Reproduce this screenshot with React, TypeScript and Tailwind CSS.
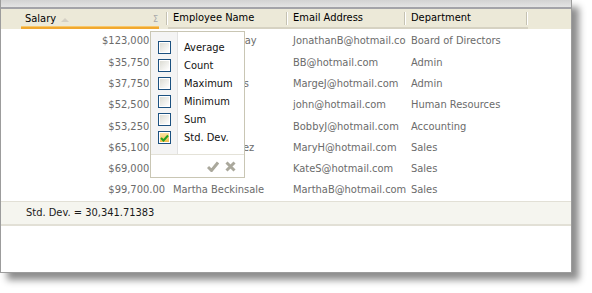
import React from "react";

const rows = [
  ["$123,000.00", "Jonathan Barclay", "JonathanB@hotmail.com", "Board of Directors"],
  ["$35,750.00", "Bob Burns", "BB@hotmail.com", "Admin"],
  ["$37,750.00", "Marge Jennings", "MargeJ@hotmail.com", "Admin"],
  ["$52,500.00", "John Smith", "john@hotmail.com", "Human Resources"],
  ["$53,250.00", "Bobby Jones", "BobbyJ@hotmail.com", "Accounting"],
  ["$65,100.00", "Mary Hernandez", "MaryH@hotmail.com", "Sales"],
  ["$69,000.00", "Kate Smith", "KateS@hotmail.com", "Sales"],
  ["$99,700.00", "Martha Beckinsale", "MarthaB@hotmail.com", "Sales"],
];

const items = ["Average", "Count", "Maximum", "Minimum", "Sum", "Std. Dev."];

function Box({ checked }: { checked?: boolean }) {
  return (
    <div className="w-[13px] h-[13px] border border-[#1c5180] p-[1px] bg-white">
      {checked ? (
        <div className="w-full h-full bg-gradient-to-b from-[#fbe4a0] to-[#f2bd4c] flex items-center justify-center">
          <svg width="9" height="8" viewBox="0 0 9 8">
            <path d="M1 4 L3.5 6.5 L8 1.5" stroke="#21a121" strokeWidth="2" fill="none" />
          </svg>
        </div>
      ) : (
        <div className="w-full h-full bg-gradient-to-br from-[#dcdcd4] to-[#ffffff]" />
      )}
    </div>
  );
}

export default function App() {
  return (
    <div
      className="w-[592px] h-[293px] bg-white relative overflow-hidden text-[11px]"
      style={{ fontFamily: '"DejaVu Sans Condensed", Tahoma, "Liberation Sans", sans-serif' }}
    >
      <div className="w-[572px] h-[273px] bg-white border-l border-r border-b border-[#9c9c9c] shadow-[7px_7px_7px_rgba(0,0,0,0.45)] flex flex-col">
        <div className="h-[9px] bg-gradient-to-b from-[#d2d2d2] to-[#e4e4e4] border-b-2 border-[#a3a3a8]" />
        <div className="h-[20px] bg-[#ece9d8] flex text-black">
          <div className="w-[20px]" />
          <div className="w-[147px] relative flex items-center pt-[1px]">
            <span className="ml-[4px]">Salary</span>
            <svg className="ml-[5px]" width="8" height="4" viewBox="0 0 8 4">
              <path d="M0 4 L4 0 L8 4 Z" fill="#d4d0c4" />
            </svg>
            <span className="ml-auto mr-[10px] text-[#a8a8a8] text-[9px]">Σ</span>
            <div className="absolute left-0 right-[9px] bottom-0 h-[3px] bg-[#f0a830] border-t border-[#f8c86a]" />
            <div className="absolute right-0 top-[3px] bottom-[4px] w-[2px] border-l border-[#c5c2b2] border-r border-r-white" />
          </div>
          {[
            ["Employee Name", "w-[120px]"],
            ["Email Address", "w-[118px]"],
            ["Department", "w-[122px]"],
          ].map(([t, w]) => (
            <div key={t} className={`${w} relative flex items-center pt-[1px] border-b-2 border-[#d6d2c2]`}>
              <span className="ml-[5px]">{t}</span>
              <div className="absolute right-0 top-[3px] bottom-[2px] w-[2px] border-l border-[#c5c2b2] border-r border-r-white" />
            </div>
          ))}
        </div>
        <div className="pt-[2px] text-[#6b6b6b]">
          {rows.map((r) => (
            <div key={r[0]} className="h-[21.3px] flex items-center">
              <div className="w-[20px]" />
              <div className="w-[147px] text-right pr-[3px] whitespace-nowrap">{r[0]}</div>
              <div className="w-[120px] pl-[5px] whitespace-nowrap overflow-hidden">{r[1]}</div>
              <div className="w-[118px] pl-[5px] whitespace-nowrap overflow-hidden">{r[2]}</div>
              <div className="w-[122px] pl-[5px] whitespace-nowrap overflow-hidden">{r[3]}</div>
            </div>
          ))}
        </div>
        <div className="h-[25px] bg-[#f5f5ef] border-t border-b-2 border-[#e2e0d6] flex items-center text-[#1a1a1a]">
          <span className="ml-[25px]">Std. Dev. = 30,341.71383</span>
        </div>
      </div>

      <div className="absolute left-[150px] top-[31px] w-[95px] h-[147px] bg-white border border-[#c9c6b4] flex flex-col">
        <div className="h-[123px] flex border-b border-[#e4e2d8]">
          <div className="w-[27px] bg-[#f4f4f4] border-r border-[#e2e2e2] pt-[9px] pl-[1px] flex flex-col items-center gap-[5px]">
            {items.map((it) => (
              <div key={it} className="h-[13px]">
                <Box checked={it === "Std. Dev."} />
              </div>
            ))}
          </div>
          <div className="pl-[6px] pt-[9px] flex flex-col gap-[5px] text-[#111]">
            {items.map((it) => (
              <div key={it} className="h-[13px] leading-[13px] whitespace-nowrap">{it}</div>
            ))}
          </div>
        </div>
        <div className="flex-1 flex items-center justify-end gap-[6px] pr-[8px]">
          <svg width="12" height="11" viewBox="0 0 12 11">
            <path d="M1 6 L4.5 9.5 L11 1.5" stroke="#aaa89c" strokeWidth="3" fill="none" />
          </svg>
          <svg width="11" height="11" viewBox="0 0 11 11">
            <path d="M1.5 1.5 L9.5 9.5 M9.5 1.5 L1.5 9.5" stroke="#aaa89c" strokeWidth="3" fill="none" />
          </svg>
        </div>
      </div>
    </div>
  );
}
